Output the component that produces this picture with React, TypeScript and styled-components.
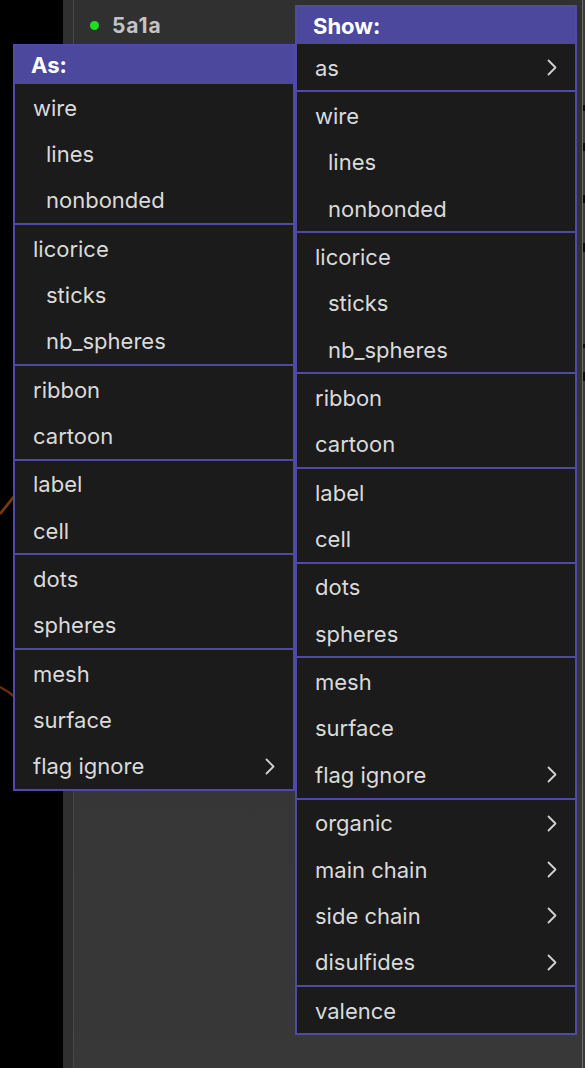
import React from "react";
import styled, { createGlobalStyle } from "styled-components";

type Entry = { label: string; indent?: boolean; sub?: boolean };

const GlobalStyle = createGlobalStyle`
  html, body {
    margin: 0;
    padding: 0;
    background: #000;
  }
  body {
    font-family: Inter, "Liberation Sans", sans-serif;
    -webkit-font-smoothing: antialiased;
  }
`;

const Screen = styled.div`
  position: relative;
  display: flex;
  width: 585px;
  height: 1068px;
  overflow: hidden;
  background: #000;
`;

const Viewer = styled.div`
  width: 63px;
  flex: none;
  background: #000;
  svg {
    display: block;
  }
`;

const Gutter = styled.div`
  width: 10px;
  flex: none;
  background: #303030;
  border-right: 1px solid #474747;
`;

const Sidebar = styled.div`
  flex: 1;
  background: linear-gradient(#303030, #383838);
  padding: 14px 0 0 15px;
`;

const ModelRow = styled.div`
  display: flex;
  align-items: center;
  gap: 13px;
  height: 22px;
  padding-left: 1px;
`;

const Dot = styled.span`
  width: 9px;
  height: 9px;
  border-radius: 50%;
  background: #1be01f;
`;

const ModelName = styled.span`
  font-weight: 700;
  font-size: 21px;
  letter-spacing: 0.9px;
  color: #c4c4c4;
`;

const Edge = styled.div`
  width: 2px;
  flex: none;
  border-left: 1px solid #6e6e6e;
  background: #3a3a3a;
  display: flex;
  flex-direction: column;
  align-items: flex-end;
`;

const Mark = styled.span<{ $gap: number; $h: number }>`
  width: 2px;
  height: ${(p) => p.$h}px;
  margin-top: ${(p) => p.$gap}px;
  background: #0a0a0a;
`;

const Menu = styled.div<{ $left: number; $top: number }>`
  position: absolute;
  left: ${(p) => p.$left}px;
  top: ${(p) => p.$top}px;
  width: 282px;
  box-sizing: border-box;
  border: 2px solid #4f4aa6;
  background: #1b1b1b;
`;

const MenuHeader = styled.div<{ $h: number }>`
  height: ${(p) => p.$h}px;
  display: flex;
  align-items: center;
  padding-left: 16px;
  background: #4c489e;
  color: #fff;
  font-weight: 700;
  font-size: 22px;
`;

const Group = styled.div`
  & + & {
    border-top: 2px solid #4f4aa6;
  }
`;

const Item = styled.div<{ $indent?: boolean }>`
  height: 46.35px;
  display: flex;
  align-items: center;
  justify-content: space-between;
  padding: 1px 18px 0 ${(p) => (p.$indent ? 31 : 18)}px;
  box-sizing: border-box;
  font-size: 22px;
  color: #dadada;
`;

const Chevron = () => (
  <svg width="10" height="17" viewBox="0 0 10 17">
    <polyline
      points="1.5,1.5 8.5,8.5 1.5,15.5"
      fill="none"
      stroke="#d2d2d2"
      strokeWidth="1.8"
      strokeLinecap="round"
      strokeLinejoin="round"
    />
  </svg>
);

const wireGroup: Entry[] = [
  { label: "wire" },
  { label: "lines", indent: true },
  { label: "nonbonded", indent: true },
];
const licoriceGroup: Entry[] = [
  { label: "licorice" },
  { label: "sticks", indent: true },
  { label: "nb_spheres", indent: true },
];
const common: Entry[][] = [
  wireGroup,
  licoriceGroup,
  [{ label: "ribbon" }, { label: "cartoon" }],
  [{ label: "label" }, { label: "cell" }],
  [{ label: "dots" }, { label: "spheres" }],
  [{ label: "mesh" }, { label: "surface" }, { label: "flag ignore", sub: true }],
];

const asGroups = common;
const showGroups: Entry[][] = [
  [{ label: "as", sub: true }],
  ...common,
  [
    { label: "organic", sub: true },
    { label: "main chain", sub: true },
    { label: "side chain", sub: true },
    { label: "disulfides", sub: true },
  ],
  [{ label: "valence" }],
];

const edgeMarks = [
  { gap: 105, h: 6 },
  { gap: 32, h: 8 },
  { gap: 44, h: 8 },
  { gap: 40, h: 9 },
  { gap: 92, h: 4 },
  { gap: 24, h: 9 },
];

const PopupMenu: React.FC<{
  title: string;
  left: number;
  top: number;
  headerHeight: number;
  groups: Entry[][];
}> = ({ title, left, top, headerHeight, groups }) => (
  <Menu $left={left} $top={top}>
    <MenuHeader $h={headerHeight}>{title}</MenuHeader>
    {groups.map((g, i) => (
      <Group key={i}>
        {g.map((e) => (
          <Item key={e.label} $indent={e.indent}>
            <span>{e.label}</span>
            {e.sub && <Chevron />}
          </Item>
        ))}
      </Group>
    ))}
  </Menu>
);

export default function App() {
  return (
    <>
      <GlobalStyle />
      <Screen>
        <Viewer>
          <svg width="63" height="1068" viewBox="0 0 63 1068">
            <path d="M0 514 L16 494" stroke="#7a3810" strokeWidth="2.8" fill="none" />
            <path d="M0 687 Q8 691 16 698" stroke="#6a300e" strokeWidth="2.4" fill="none" />
          </svg>
        </Viewer>
        <Gutter />
        <Sidebar>
          <ModelRow>
            <Dot />
            <ModelName>5a1a</ModelName>
          </ModelRow>
        </Sidebar>
        <Edge>
          {edgeMarks.map((m, i) => (
            <Mark key={i} $gap={m.gap} $h={m.h} />
          ))}
        </Edge>
        <PopupMenu title="Show:" left={295} top={5} headerHeight={37} groups={showGroups} />
        <PopupMenu title="As:" left={13} top={44} headerHeight={38} groups={asGroups} />
      </Screen>
    </>
  );
}
